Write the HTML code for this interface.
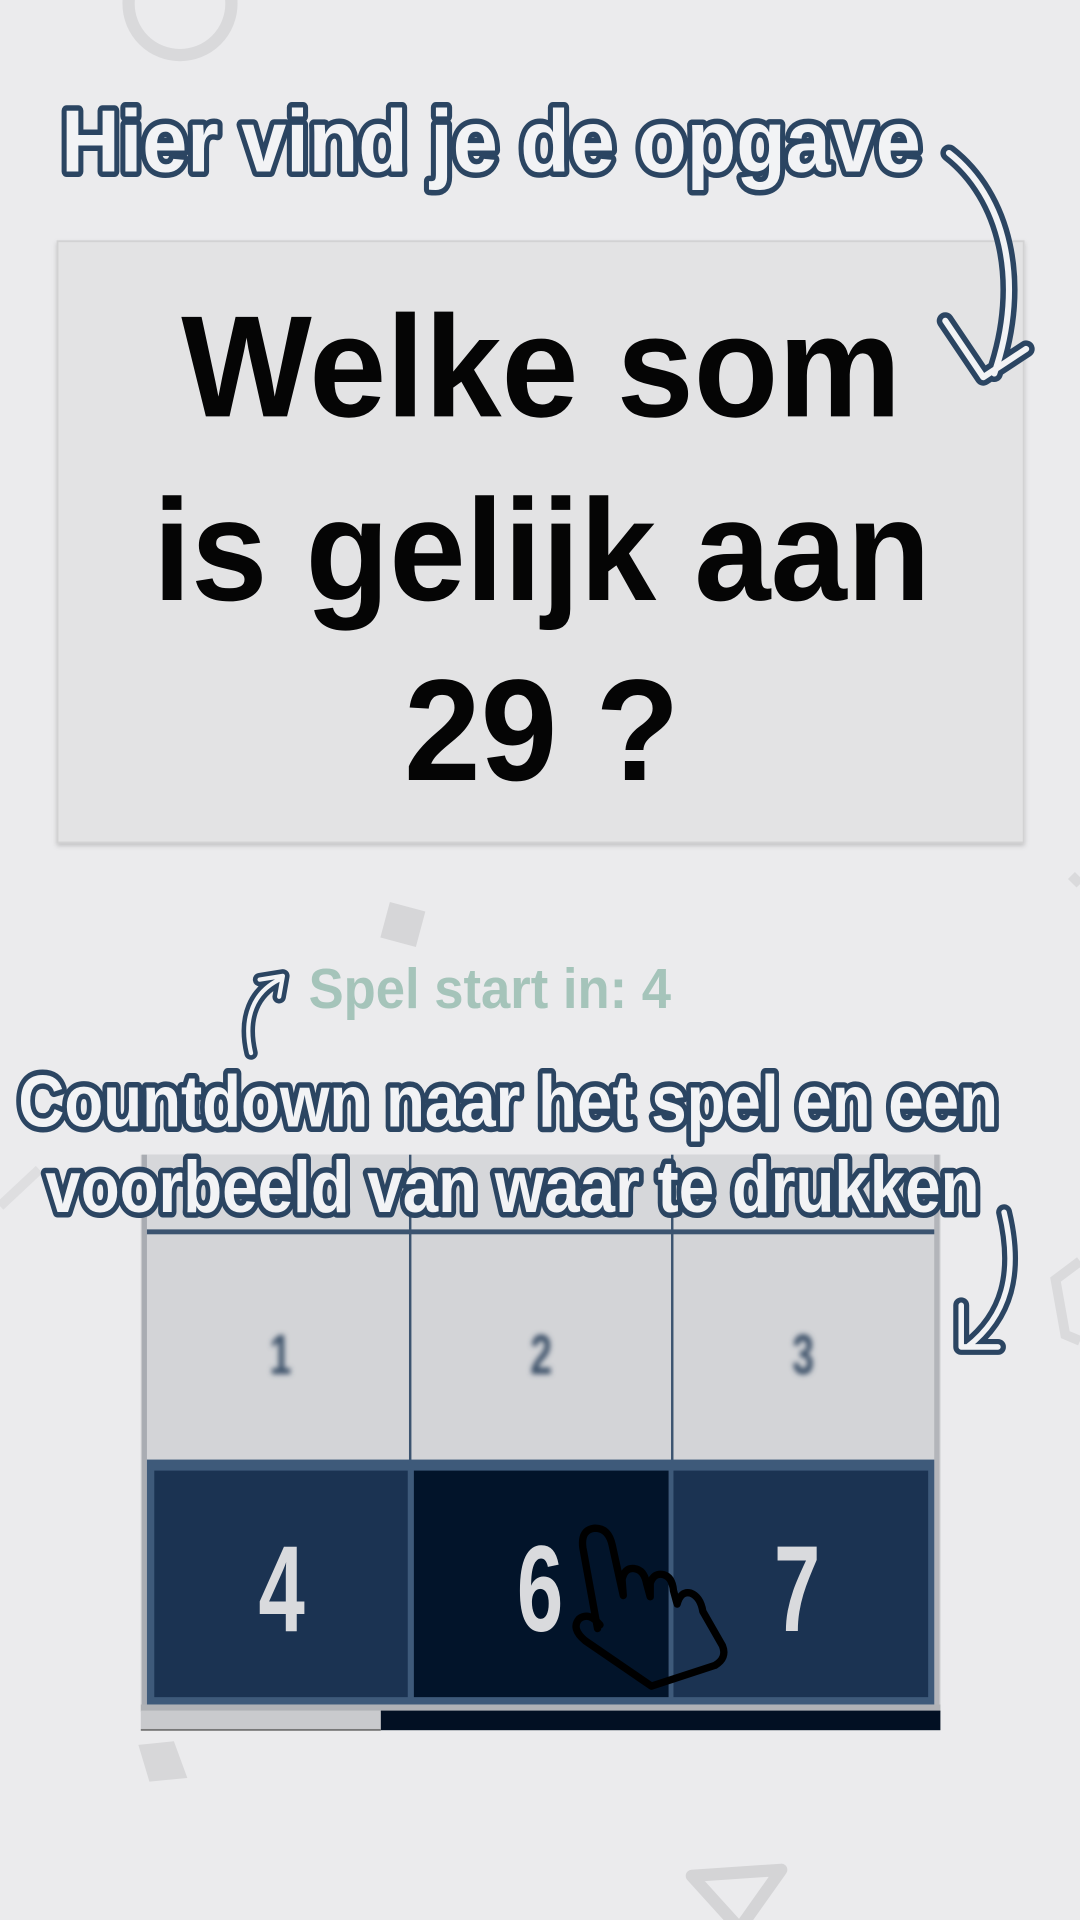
<!DOCTYPE html>
<html><head><meta charset="utf-8"><style>
html,body{margin:0;padding:0;background:#ebebed;}
svg{display:block;}
</style></head><body>
<svg width="1080" height="1920" viewBox="0 0 882 1568" xmlns="http://www.w3.org/2000/svg">
<defs>
<filter id="bl" x="-50%" y="-50%" width="200%" height="200%"><feGaussianBlur stdDeviation="2.2"/></filter>
<filter id="sh" x="-5%" y="-5%" width="110%" height="110%"><feDropShadow dx="0" dy="2" stdDeviation="2" flood-color="#000" flood-opacity="0.18"/></filter>
</defs>
<rect width="882" height="1568" fill="#ebebed"/>
<!-- decorations -->
<circle cx="147" cy="3" r="42" fill="none" stroke="#d9d9db" stroke-width="10"/>
<rect x="314" y="740" width="30" height="30" fill="#d6d6d8" transform="rotate(15 329 755)"/>
<path d="M0 985 L32 955" stroke="#dedee0" stroke-width="8"/>
<path d="M882 1030 L862 1045 L870 1090 L882 1095" fill="none" stroke="#dadadc" stroke-width="8"/>
<path d="M875 715 L882 722" stroke="#dadadc" stroke-width="8"/>
<path d="M113 1425 L142 1422 L153 1452 L122 1455 Z" fill="#d7d7d9"/>
<path d="M565 1532 L638 1527 L604 1575 Z" fill="none" stroke="#d4d4d6" stroke-width="10" stroke-linejoin="round"/>

<!-- top title -->
<text x="50" y="140" font-family="Liberation Sans Narrow, Liberation Sans, sans-serif" font-weight="bold" font-size="72" textLength="702" lengthAdjust="spacingAndGlyphs" fill="#f2f3f5" stroke="#2b4562" stroke-width="9" stroke-linejoin="round" paint-order="stroke">Hier vind je de opgave</text>

<!-- question box -->
<rect x="47" y="197" width="789" height="491" fill="#e3e3e4" stroke="#d2d2d3" stroke-width="1.5" filter="url(#sh)"/>
<g font-family="Liberation Sans, sans-serif" font-weight="bold" font-size="118" fill="#050505">
<text x="148" y="340" textLength="588" lengthAdjust="spacingAndGlyphs">Welke som</text>
<text x="125" y="490" textLength="635" lengthAdjust="spacingAndGlyphs">is gelijk aan</text>
<text x="330" y="637" textLength="225" lengthAdjust="spacingAndGlyphs">29 ?</text>
</g>

<!-- top arrow (over box) -->
<g fill="none" stroke-linecap="round" stroke-linejoin="round">
<path d="M775 125 C820 160 838 230 812 305 M772 262 L803 308 L838 285" stroke="#2b4562" stroke-width="14"/>
<path d="M775 125 C820 160 838 230 812 305 M772 262 L803 308 L838 285" stroke="#f2f3f5" stroke-width="5"/>
</g>

<!-- countdown -->
<text x="252" y="823" font-family="Liberation Sans, sans-serif" font-weight="bold" font-size="46" textLength="296" lengthAdjust="spacingAndGlyphs" fill="#a5c4ba">Spel start in: 4</text>
<g fill="none" stroke-linecap="round" stroke-linejoin="round">
<path d="M205 860 C198 830 208 810 228 800 M212 800 L231 797 L228 814" stroke="#2b4562" stroke-width="11"/>
<path d="M205 860 C198 830 208 810 228 800 M212 800 L231 797 L228 814" stroke="#f2f3f5" stroke-width="3.5"/>
</g>

<!-- grid panel -->
<rect x="115" y="943" width="653" height="454" fill="#c7c8cb"/>
<rect x="120" y="943" width="643" height="62" fill="#d6d7da"/>
<rect x="120" y="1008" width="643" height="184" fill="#d3d4d7"/>
<rect x="116" y="943" width="4" height="454" fill="#a9acb2"/>
<rect x="763" y="943" width="4" height="454" fill="#b3b5ba"/>
<rect x="120" y="1004" width="643" height="4" fill="#3c5470"/>
<rect x="334" y="943" width="2" height="250" fill="#3c5470"/>
<rect x="548" y="943" width="2" height="250" fill="#3c5470"/>
<g font-family="Liberation Sans, sans-serif" font-weight="bold" font-size="46" fill="#3b5068" text-anchor="middle" filter="url(#bl)">
<text transform="translate(229 1122) scale(0.7 1)">1</text>
<text transform="translate(442 1122) scale(0.7 1)">2</text>
<text transform="translate(656 1122) scale(0.7 1)">3</text>
</g>
<rect x="120" y="1192" width="643" height="200" fill="#3e5a7a"/>
<rect x="126" y="1201" width="207" height="185" fill="#1b3352"/>
<rect x="338" y="1201" width="208" height="185" fill="#02142a"/>
<rect x="550" y="1201" width="208" height="185" fill="#1b3352"/>
<g font-family="Liberation Sans, sans-serif" font-weight="bold" font-size="100" fill="#d9dadd" text-anchor="middle">
<text transform="translate(230 1332) scale(0.68 1)">4</text>
<text transform="translate(441 1332) scale(0.68 1)">6</text>
<text transform="translate(651 1332) scale(0.68 1)">7</text>
</g>
<rect x="115" y="1392" width="653" height="6" fill="#b0b2b6"/>
<rect x="115" y="1397" width="196" height="16" fill="#c9cacd"/>
<rect x="311" y="1397" width="457" height="16" fill="#021023"/>
<rect x="115" y="1412" width="196" height="1.5" fill="#777"/>

<!-- hand -->
<path d="M488 1330 L476 1264 Q474 1249 486 1248 Q497 1248 500 1262 L509 1303 L508 1290 Q510 1280 518 1281 Q526 1282 528 1293 L531 1304 L531 1293 Q534 1284 542 1286 Q549 1288 550 1299 L553 1310 Q556 1299 564 1301 Q572 1304 574 1316 L590 1344 Q594 1354 584 1360 L532 1377 L478 1340 Q466 1330 473 1322 Q481 1316 490 1327" fill="none" stroke="#000" stroke-width="6" stroke-linejoin="round" stroke-linecap="round"/>

<!-- countdown caption -->
<g font-family="Liberation Sans Narrow, Liberation Sans, sans-serif" font-weight="bold" font-size="60" fill="#f2f3f5" stroke="#2b4562" stroke-width="9" stroke-linejoin="round" paint-order="stroke">
<text x="15" y="920" textLength="800" lengthAdjust="spacingAndGlyphs">Countdown naar het spel en een</text>
<text x="37" y="990" textLength="763" lengthAdjust="spacingAndGlyphs">voorbeeld van waar te drukken</text>
</g>
<g fill="none" stroke-linecap="round" stroke-linejoin="round">
<path d="M820 990 C832 1040 822 1075 790 1100 M785 1066 L785 1100 L815 1100" stroke="#2b4562" stroke-width="13"/>
<path d="M820 990 C832 1040 822 1075 790 1100 M785 1066 L785 1100 L815 1100" stroke="#f2f3f5" stroke-width="4.5"/>
</g>
</svg>
</body></html>
